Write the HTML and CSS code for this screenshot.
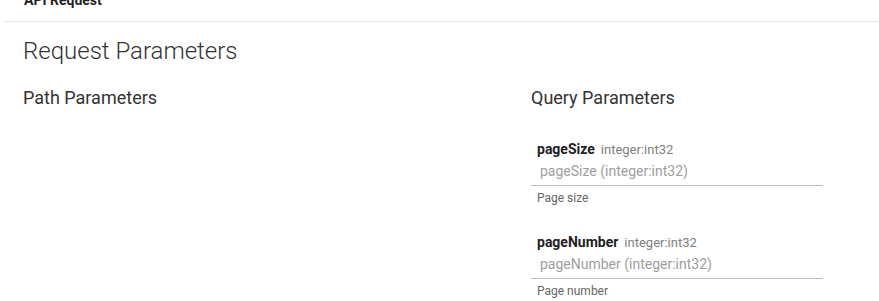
FILE: index.html
```html
<!DOCTYPE html>
<html>
<head>
<meta charset="utf-8">
<link rel="stylesheet" href="styles.css">
</head>
<body>
<div class="page">
  <header class="topbar">
    <div class="topbar-title">API Request</div>
  </header>
  <section class="section">
    <h1 class="title">Request Parameters</h1>
    <div class="cols">
      <div class="col">
        <h2 class="subtitle">Path Parameters</h2>
      </div>
      <div class="col">
        <h2 class="subtitle">Query Parameters</h2>
        <div class="params">
          <div class="param">
            <div class="param-head"><span class="param-name">pageSize</span><span class="param-type">integer:int32</span></div>
            <input class="param-input" type="text" placeholder="pageSize (integer:int32)">
            <div class="param-desc">Page size</div>
          </div>
          <div class="param">
            <div class="param-head"><span class="param-name">pageNumber</span><span class="param-type">integer:int32</span></div>
            <input class="param-input" type="text" placeholder="pageNumber (integer:int32)">
            <div class="param-desc">Page number</div>
          </div>
        </div>
      </div>
    </div>
  </section>
</div>
</body>
</html>
```
FILE: styles.css
```css
html, body {
  margin: 0;
  padding: 0;
  background: #fff;
  font-family: Roboto, "Liberation Sans", sans-serif;
  color: #333;
  overflow: hidden;
}
.page {
  margin-top: -8px;
}
.topbar {
  margin-left: 3px;
  border-bottom: 1px solid #e3e8ee;
  height: 29px;
}
.topbar-title {
  padding-left: 21px;
  font-size: 14px;
  font-weight: 700;
  line-height: 16px;
  color: #222;
}
.section {
  padding: 0 23px;
}
.title {
  margin: 15px 0 0 0;
  font-size: 24px;
  font-weight: 300;
  line-height: 28px;
  color: #333;
}
.cols {
  display: grid;
  grid-template-columns: 508px 1fr;
  margin-top: 22px;
}
.subtitle {
  margin: 0;
  font-size: 18px;
  font-weight: 400;
  line-height: 22px;
  color: #333;
}
.params {
  display: flex;
  flex-direction: column;
  gap: 28px;
  margin-top: 31px;
  width: 292px;
}
.param-head {
  padding-left: 6px;
  line-height: 18px;
}
.param-name {
  font-size: 14px;
  font-weight: 700;
  color: #222;
}
.param-type {
  margin-left: 6px;
  font-size: 13px;
  color: #808080;
}
.param-input {
  display: block;
  width: 100%;
  box-sizing: border-box;
  border: none;
  border-bottom: 1px solid #bbb;
  padding: 3px 0 5px 9px;
  font-family: Roboto, "Liberation Sans", sans-serif;
  font-size: 14px;
  line-height: 18px;
  outline: none;
  color: #333;
  background: transparent;
}
.param-input::placeholder {
  color: #9e9e9e;
}
.param-desc {
  padding-left: 6px;
  margin-top: 5px;
  font-size: 12px;
  line-height: 14px;
  color: #666;
}
```
